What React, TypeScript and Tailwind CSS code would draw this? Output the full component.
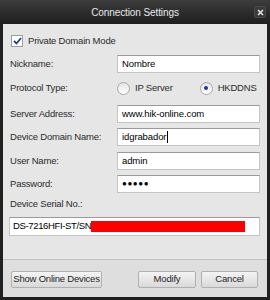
import React from "react";

const font = { fontFamily: '"Liberation Sans", Arial, sans-serif' };

const Field = ({ label, children }: { label: string; children: React.ReactNode }) => (
  <div className="flex items-center h-[18px]">
    <span className="w-[107px] shrink-0 whitespace-nowrap text-[9.5px] tracking-[-0.2px] text-[#2b2b2b]">{label}</span>
    <div className="w-[143px] h-[18px] bg-white border border-[#c4c4c4] border-t-[#9a9a9a] flex items-center pl-[4px] text-[9.5px] tracking-[-0.1px] text-black whitespace-nowrap">
      {children}
    </div>
  </div>
);

const Radio = ({ checked, label }: { checked?: boolean; label: string }) => (
  <div className="flex items-center gap-[5px] whitespace-nowrap">
    <span className="w-[13px] h-[13px] rounded-full border border-[#a8a8a8] bg-gradient-to-b from-[#e4e4e4] to-white flex items-center justify-center">
      {checked && <span className="w-[4px] h-[4px] rounded-full bg-[#1a3b8c]" />}
    </span>
    <span className="text-[9.5px] tracking-[-0.2px] text-[#2b2b2b]">{label}</span>
  </div>
);

const Button = ({ children, width }: { children: React.ReactNode; width: string }) => (
  <button
    className={`${width} h-[17px] rounded-[2px] border border-[#b0b0b0] bg-gradient-to-b from-[#f4f4f4] to-[#d9d9d9] text-[9.5px] tracking-[-0.2px] text-[#1e1e1e] whitespace-nowrap flex items-center justify-center`}
  >
    {children}
  </button>
);

export default function App() {
  return (
    <div className="w-[270px] h-[300px] bg-[#202020] flex flex-col px-[3px] pb-[3px]" style={font}>
      {/* Title bar */}
      <div className="relative h-[24px] shrink-0 bg-gradient-to-b from-[#3d3d3d] to-[#1e1e1e] -mx-[3px] flex items-center justify-center">
        <span className="text-[10px] tracking-[-0.1px] text-[#e8e8e8] whitespace-nowrap">Connection Settings</span>
        <div className="absolute right-[4px] top-[6px] w-[12px] h-[12px] rounded-[2px] bg-[#3a3a3a] border border-[#4a4a4a] flex items-center justify-center">
          <svg width="7" height="7" viewBox="0 0 7 7">
            <path d="M1 1L6 6M6 1L1 6" stroke="#e6e6e6" strokeWidth="1.6" />
          </svg>
        </div>
      </div>

      {/* Body */}
      <div className="flex-1 bg-[#e6e6e6] flex flex-col">
        <div className="flex flex-col pl-[7px] pr-[7px]">
          <div className="mt-[11px] h-[12px] flex items-center gap-[5px] pl-[1px] whitespace-nowrap">
            <span className="w-[12px] h-[12px] bg-white border border-[#9c9c9c] flex items-center justify-center">
              <svg width="9" height="8" viewBox="0 0 9 8">
                <path d="M1 4L3.5 6.5L8 1" stroke="#1f3f9a" strokeWidth="1.8" fill="none" />
              </svg>
            </span>
            <span className="text-[9.5px] tracking-[-0.2px] text-[#2b2b2b]">Private Domain Mode</span>
          </div>

          <div className="mt-[8px]">
            <Field label="Nickname:">Nombre</Field>
          </div>

          <div className="mt-[9px] h-[12px] flex items-center">
            <span className="w-[107px] shrink-0 whitespace-nowrap text-[9.5px] tracking-[-0.2px] text-[#2b2b2b]">Protocol Type:</span>
            <div className="flex items-center gap-[27px]">
              <Radio label="IP Server" />
              <Radio checked label="HKDDNS" />
            </div>
          </div>

          <div className="mt-[11px]">
            <Field label="Server Address:">www.hik-online.com</Field>
          </div>
          <div className="mt-[5px]">
            <Field label="Device Domain Name:">
              idgrabador<span className="w-px h-[12px] bg-black ml-[1px]" />
            </Field>
          </div>
          <div className="mt-[6px]">
            <Field label="User Name:">admin</Field>
          </div>
          <div className="mt-[5px]">
            <Field label="Password:">
              <span className="text-[8px] font-bold tracking-[0.6px]">●●●●●</span>
            </Field>
          </div>

          <div className="mt-[4px] h-[14px] text-[9.5px] tracking-[-0.2px] text-[#2b2b2b] leading-[14px] whitespace-nowrap">Device Serial No.:</div>
          <div className="mt-[6px] ml-[-1px] h-[19px] bg-white border border-[#c4c4c4] border-t-[#9a9a9a] flex items-center pl-[3px] text-[9.5px] tracking-[-0.35px] text-black whitespace-nowrap">
            DS-7216HFI-ST/SN
            <span className="inline-block w-[154px] h-[11px] bg-[#ff0000]" />
          </div>
        </div>

        <div className="flex-1" />

        {/* Footer */}
        <div className="h-[38px] shrink-0 border-t border-[#c2c2c2] bg-[#dedede] flex items-start pt-[11px] pl-[8px] pr-[9px]">
          <Button width="w-[91px]">Show Online Devices</Button>
          <div className="flex-1" />
          <div className="flex gap-[5px]">
            <Button width="w-[58px]">Modify</Button>
            <Button width="w-[57px]">Cancel</Button>
          </div>
        </div>
      </div>
    </div>
  );
}
